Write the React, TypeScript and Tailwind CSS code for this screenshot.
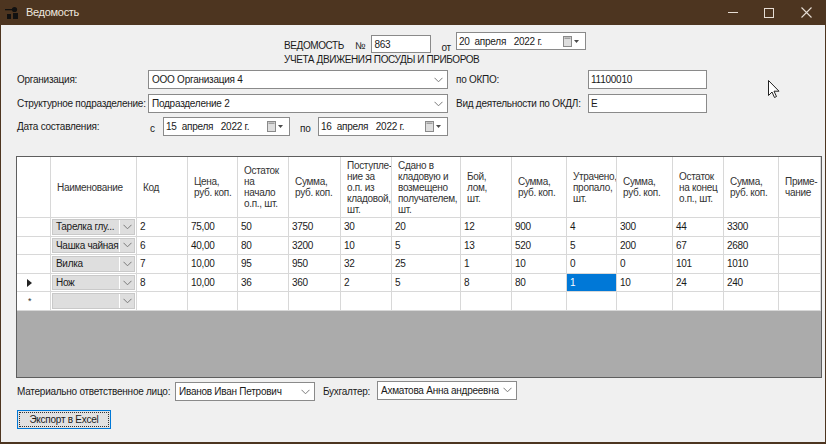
import React from "react";

const cols = [34, 86, 51, 50, 51, 52, 51, 69, 51, 55, 50, 56, 51, 55, 42];

const headers: string[] = [
  "",
  "Наименование",
  "Код",
  "Цена,\nруб. коп.",
  "Остаток\nна\nначало\nо.п., шт.",
  "Сумма,\nруб. коп.",
  "Поступле-\nние за\nо.п. из\nкладовой,\nшт.",
  "Сдано в\nкладовую и\nвозмещено\nполучателем,\nшт.",
  "Бой,\nлом,\nшт.",
  "Сумма,\nруб. коп.",
  "Утрачено,\nпропало,\nшт.",
  "Сумма,\nруб. коп.",
  "Остаток\nна конец\nо.п., шт.",
  "Сумма,\nруб. коп.",
  "Приме-\nчание",
];

const rows: string[][] = [
  ["Тарелка глу...", "2", "75,00", "50", "3750", "30", "20", "12", "900", "4", "300", "44", "3300", ""],
  ["Чашка чайная", "6", "40,00", "80", "3200", "10", "5", "13", "520", "5", "200", "67", "2680", ""],
  ["Вилка", "7", "10,00", "95", "950", "32", "25", "1", "10", "0", "0", "101", "1010", ""],
  ["Нож", "8", "10,00", "36", "360", "2", "5", "8", "80", "1", "10", "24", "240", ""],
  ["", "", "", "", "", "", "", "", "", "", "", "", "", ""],
];

function Chevron({ className = "" }: { className?: string }) {
  return (
    <svg width="9" height="6" viewBox="0 0 9 6" className={className}>
      <path d="M0.5 0.8 L4.5 4.8 L8.5 0.8" fill="none" stroke="#7a7a7a" strokeWidth="1" />
    </svg>
  );
}

function Combo({ value, w, h = 19 }: { value: string; w: number; h?: number }) {
  return (
    <div
      className="flex items-center bg-white border border-[#8a8a8a] shrink-0"
      style={{ width: w, height: h }}
    >
      <span className="flex-1 pl-[3px] whitespace-pre overflow-hidden">{value}</span>
      <span className="w-[17px] flex items-center justify-center">
        <Chevron />
      </span>
    </div>
  );
}

function CalIcon() {
  return (
    <span className="flex items-center gap-[2px] mr-[6px]">
      <svg width="9" height="11" viewBox="0 0 9 11">
        <rect x="0.5" y="0.5" width="8" height="10" fill="#dedede" stroke="#8a8a8a" />
        <rect x="1.5" y="1.5" width="6" height="1.5" fill="#a0a0a0" />
      </svg>
      <svg width="5" height="3" viewBox="0 0 5 3">
        <path d="M0 0 L5 0 L2.5 3 Z" fill="#4a4a4a" />
      </svg>
    </span>
  );
}

function DateBox({ value, w, h = 19 }: { value: string; w: number; h?: number }) {
  return (
    <div
      className="flex items-center bg-white border border-[#8a8a8a] shrink-0"
      style={{ width: w, height: h }}
    >
      <span className="flex-1 pl-[2px] whitespace-pre">{value}</span>
      <CalIcon />
    </div>
  );
}

function TextBox({ value, w, h = 19 }: { value: string; w: number; h?: number }) {
  return (
    <div
      className="flex items-center bg-white border border-[#8a8a8a] shrink-0 pl-[2px]"
      style={{ width: w, height: h }}
    >
      {value}
    </div>
  );
}

function GridCombo({ value }: { value: string }) {
  return (
    <div className="h-full w-full p-[1px] bg-white">
      <div className="h-full w-full flex bg-[#dedede] border border-[#c9c9c9]">
        <span className="flex-1 flex items-center pl-[3px] whitespace-pre overflow-hidden">{value}</span>
        <span className="w-[15px] flex items-center justify-center border-l border-white">
          <Chevron />
        </span>
      </div>
    </div>
  );
}

export default function App() {
  return (
    <div className="relative w-[826px] h-[444px] bg-[#4d3520] flex flex-col font-['Liberation_Sans',Arial,sans-serif] text-[10px] tracking-[-0.25px] text-[#1a1a1a] overflow-hidden whitespace-nowrap">
      {/* Title bar */}
      <div className="h-[25px] shrink-0 flex items-center text-[#efe7df]">
        <svg width="16" height="14" viewBox="0 0 16 14" className="ml-[5px]">
          <rect x="0" y="3" width="7" height="1.3" fill="#111" />
          <circle cx="9.5" cy="3.5" r="2.6" fill="#111" />
          <rect x="2" y="8" width="4" height="5" fill="#111" />
          <rect x="8" y="7" width="5" height="6" fill="#111" />
        </svg>
        <span className="ml-[5px] text-[11px] tracking-[-0.3px]">Ведомость</span>
        <div className="flex-1" />
        <div className="w-[36px] flex justify-center">
          <div className="w-[10px] h-[1px] bg-[#e6ddd4]" />
        </div>
        <div className="w-[36px] flex justify-center">
          <div className="w-[10px] h-[10px] border border-[#e6ddd4]" />
        </div>
        <div className="w-[38px] flex justify-center mr-[1px]">
          <svg width="11" height="11" viewBox="0 0 11 11">
            <path d="M0.5 0.5 L10.5 10.5 M10.5 0.5 L0.5 10.5" stroke="#e6ddd4" strokeWidth="1.1" />
          </svg>
        </div>
      </div>

      {/* Client area */}
      <div className="flex-1 mx-[1px] mb-[2px] bg-[#f0f0f0] flex flex-col">
        {/* Header title */}
        <div className="flex items-start pl-[283px] pt-[7px] h-[28px]">
          <span className="mt-[6px] tracking-[-0.4px]">ВЕДОМОСТЬ</span>
          <span className="ml-[11px] mt-[6px]">№</span>
          <div className="ml-[6px] mt-[3px]">
            <TextBox value="863" w={60} h={18} />
          </div>
          <span className="ml-[10px] mt-[8px]">от</span>
          <div className="ml-[5px]">
            <DateBox value="20  апреля   2022 г." w={130} h={18} />
          </div>
        </div>
        <div className="pl-[283px] h-[14px] leading-[14px] tracking-[-0.4px]">
          УЧЕТА ДВИЖЕНИЯ ПОСУДЫ И ПРИБОРОВ
        </div>

        {/* Form rows */}
        <div className="flex items-center mt-[3px] h-[19px]">
          <span className="ml-[16px] w-[131px]">Организация:</span>
          <Combo value="ООО Организация 4" w={300} />
          <span className="ml-[8px] w-[132px]">по ОКПО:</span>
          <TextBox value="11100010" w={119} />
        </div>
        <div className="flex items-center mt-[5px] h-[19px]">
          <span className="ml-[16px] w-[131px]">Структурное подразделение:</span>
          <Combo value="Подразделение 2" w={300} />
          <span className="ml-[8px] w-[132px]">Вид деятельности по ОКДЛ:</span>
          <TextBox value="E" w={119} />
        </div>
        <div className="flex items-center mt-[4px] h-[19px]">
          <span className="ml-[16px] w-[133px]">Дата составления:</span>
          <span className="w-[13px] mt-[3px]">с</span>
          <DateBox value="15  апреля   2022 г." w={127} />
          <span className="ml-[10px] w-[18px] mt-[3px]">по</span>
          <DateBox value="16  апреля   2022 г." w={130} />
        </div>

        {/* Grid */}
        <div className="ml-[15px] mt-[20px] w-[806px] h-[222px] shrink-0 border border-[#5e5e5e] bg-[#ababab] flex flex-col text-[10px] tracking-[-0.3px]">
          <div className="flex h-[61px] bg-white border-b border-[#d8d8d8] shrink-0">
            {headers.map((h, i) => (
              <div
                key={i}
                className="h-full flex items-center pl-[6px] border-r border-[#d8d8d8] whitespace-pre leading-[11px] text-[#333] overflow-hidden"
                style={{ width: cols[i] }}
              >
                {h}
              </div>
            ))}
          </div>
          {rows.map((r, ri) => (
            <div key={ri} className="flex h-[18.6px] bg-white shrink-0">
              <div
                className="h-full flex items-center justify-center border-r border-b border-[#d8d8d8]"
                style={{ width: cols[0] }}
              >
                {ri === 3 && (
                  <svg width="5" height="8" viewBox="0 0 5 8" className="mr-[8px]">
                    <path d="M0 0 L5 4 L0 8 Z" fill="#222" />
                  </svg>
                )}
                {ri === 4 && <span className="mr-[8px] text-[9px] leading-none text-[#333]">*</span>}
              </div>
              <div className="h-full border-r border-b border-[#d8d8d8]" style={{ width: cols[1] }}>
                <GridCombo value={r[0]} />
              </div>
              {r.slice(1).map((c, ci) => {
                const sel = ri === 3 && ci === 8;
                return (
                  <div
                    key={ci}
                    className={
                      sel
                        ? "h-full flex items-center pl-[3px] bg-[#0078d7] text-white border-r border-b border-[#d8d8d8]"
                        : "h-full flex items-center pl-[3px] border-r border-b border-[#d8d8d8]"
                    }
                    style={{ width: cols[ci + 2] }}
                  >
                    {c}
                  </div>
                );
              })}
            </div>
          ))}
          <div className="flex-1" />
        </div>

        {/* Bottom */}
        <div className="flex items-center mt-[4px] h-[19px]">
          <span className="ml-[16px] w-[158px]">Материально ответственное лицо:</span>
          <Combo value="Иванов Иван Петрович" w={140} />
          <span className="ml-[8px] w-[54px]">Бухгалтер:</span>
          <div className="-mt-[3px]">
            <Combo value="Ахматова Анна андреевна" w={140} />
          </div>
        </div>
        <div className="ml-[16px] mt-[9px] w-[94px] h-[19px] shrink-0 border border-[#0078d7] bg-[#e1e1e1] p-[1px]">
          <div className="w-full h-full border border-dotted border-[#333] flex items-center justify-center">
            Экспорт в Excel
          </div>
        </div>
      </div>

      {/* mouse cursor */}
      <svg
        width="12"
        height="19"
        viewBox="0 0 12 19"
        className="absolute left-[768px] top-[80px]"
      >
        <path d="M0.5 0.5 L0.5 15.5 L4 12 L6.5 17.5 L8.5 16.5 L6 11.2 L11 11.2 Z" fill="white" stroke="#222" strokeWidth="1" />
      </svg>
    </div>
  );
}
